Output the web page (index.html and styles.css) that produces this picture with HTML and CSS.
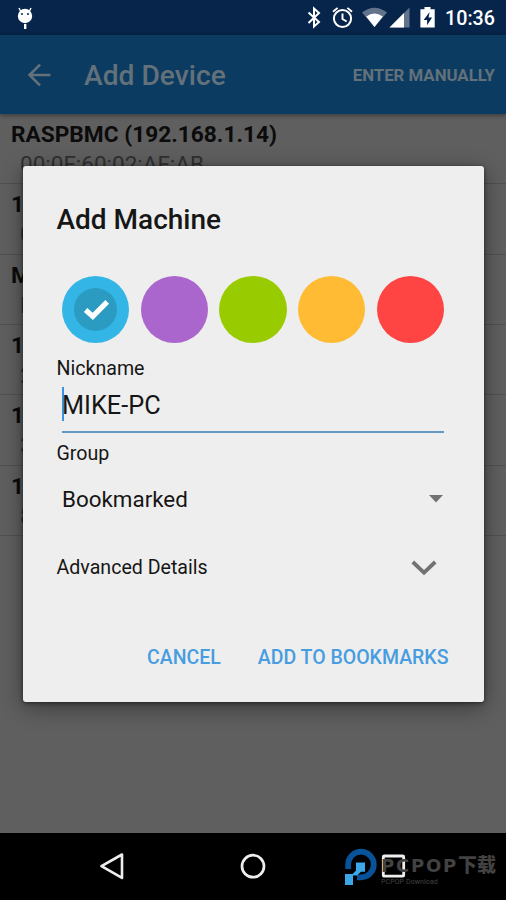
FILE: index.html
```html
<!DOCTYPE html>
<html lang="en">
<head>
<meta charset="utf-8">
<title>Add Device</title>
<link rel="stylesheet" href="styles.css">
</head>
<body>
<div class="screen">
  <header class="status">
    <svg class="droid" width="18" height="24" viewBox="0 0 18 24"><path d="M4.500 4 3 1M13.500 4 15 1" stroke="#fff" stroke-width="1.4"/><circle cx="9" cy="9" r="7.2" fill="#fff"/><path d="M8 17h2.400v5H8z" fill="#fff"/><circle cx="6" cy="7" r="1" fill="#07254a"/><circle cx="12" cy="7" r="1" fill="#07254a"/></svg>
    <svg class="icons" width="132" height="24" viewBox="0 0 132 24" fill="none" stroke="#fff">
      <path d="M2.500 6.500l10.500 9.500-5 4.500V2.500L13 7 2.500 17" stroke-width="2"/>
      <circle cx="36.500" cy="12.500" r="8.600" stroke-width="2"/><path d="M36.500 7.500v5.500l4.200 2.500M27 5.800l4.600-3.900M46 5.800l-4.600-3.900" stroke-width="1.9"/>
      <path d="M56 6.500Q68.500-3 81 6.500L68.500 21z" fill="#62738c" stroke="none"/><path d="M60.200 10.500Q68.500 4.500 76.800 10.500L68.500 21z" fill="#fff" stroke="none"/>
      <path d="M103.500 1.500v20h-20z" fill="#62738c" stroke="none"/><path d="M98 7v14.500H83.500z" fill="#fff" stroke="none"/>
      <path d="M118.500 1h6v2.200h4.200v18.300h-14.300V3.200h4.100z" fill="#fff" stroke="none"/><path d="M123.600 6l-6 8h3.500v5.300l5-7.800h-3.500z" fill="#07254a" stroke="none"/>
    </svg>
    <span class="clock">10:36</span>
  </header>
  <div class="appbar">
    <svg width="24" height="24" viewBox="0 0 24 24" fill="none" stroke="#63717b" stroke-width="2.600"><path d="M23.500 12H3M13 1.600 2.500 12l10.500 10.400"/></svg>
    <h1>Add Device</h1>
    <span class="manual">ENTER MANUALLY</span>
  </div>
  <main class="list">
    <div class="row"><b>RASPBMC (192.168.1.14)</b><span>00:0F:60:02:AF:AB</span></div>
    <div class="row"><b>1</b><span>0</span></div>
    <div class="row"><b>M</b><span>B</span></div>
    <div class="row"><b>1</b><span>2</span></div>
    <div class="row"><b>1</b><span>3</span></div>
    <div class="row"><b>1</b><span>8</span></div>
  </main>
  <nav class="navbar">
    <svg width="26" height="30" viewBox="0 0 26 30"><path d="M22 3.500v23.400L1.500 15.200z" fill="none" stroke="#eee" stroke-width="2.600" stroke-linejoin="round"/></svg>
    <svg width="26" height="30" viewBox="0 0 26 30"><circle cx="13" cy="15.200" r="11" fill="none" stroke="#eee" stroke-width="2.700"/></svg>
    <svg width="26" height="30" viewBox="0 0 26 30"><rect x="2.300" y="5" width="20.400" height="20.200" rx="1" fill="none" stroke="#eee" stroke-width="2.800"/></svg>
  </nav>

  <section class="dialog">
    <h2>Add Machine</h2>
    <div class="swatches">
      <i class="dot blue"><svg width="43" height="43" viewBox="0 0 43 43"><circle cx="21.500" cy="21.500" r="21.500" fill="#2b9bc2"/><path d="M11.600 22 18.800 28.400 33.200 13.900" fill="none" stroke="#fff" stroke-width="5.200"/></svg></i>
      <i class="dot purple"></i><i class="dot green"></i><i class="dot orange"></i><i class="dot red"></i>
    </div>
    <label class="label nick">Nickname</label>
    <div class="field"><i class="caret"></i><span>MIKE-PC</span></div>
    <label class="label group">Group</label>
    <div class="select"><span>Bookmarked</span><svg width="14" height="8" viewBox="0 0 14 8"><path d="M0 0h14L7 7.500z" fill="#727272"/></svg></div>
    <div class="advanced"><span>Advanced Details</span><svg width="26" height="16" viewBox="0 0 26 16"><path d="M1.800 2 13 12.600 24.200 2" fill="none" stroke="#727272" stroke-width="3.800"/></svg></div>
    <div class="actions"><span>CANCEL</span><span>ADD TO BOOKMARKS</span></div>
  </section>

  <div class="watermark">
    <svg width="34" height="38" viewBox="0 0 34 38"><path d="M3.200 21V16.500A12.800 12.800 0 1 1 16 29.300H12" fill="none" stroke="#075298" stroke-width="5.800"/><path d="M11 14.500h9v9.300h-4l-4 3.700H8v9.500H0V26h7.500l3.500-3.500z" fill="#3ba7e8"/></svg>
    <div class="brand"><strong><span class="latin">PCPOP</span>下载</strong><small>PCPOP Download</small></div>
  </div>
</div>
</body>
</html>
```
FILE: styles.css
```css
* { box-sizing: border-box; }
body { margin: 0; font-family: Roboto, "Noto Sans CJK SC", sans-serif; }
h1, h2 { margin: 0; font-weight: 500; }
svg { display: block; flex: none; }
.screen { position: relative; width: 506px; height: 900px; overflow: hidden; display: flex; flex-direction: column; background: #5f5f5f; }
.status { height: 35px; flex: none; display: flex; align-items: flex-start; background: #07254a; color: #fff; padding: 6px 11px 0 16px; }
.status .icons { margin-left: auto; }
.droid { margin-top: 1px; }
.clock { width: 50px; margin-left: 7px; font-size: 19.7px; font-weight: 500; line-height: 26px; white-space: nowrap; }
.appbar { height: 79px; flex: none; display: flex; align-items: center; padding: 0 11px 0 27px; background: #0c3b61; color: #63717b; box-shadow: 0 1px 5px rgba(0,0,0,.45); z-index: 1; }
.appbar h1 { margin-left: 33px; font-size: 28.2px; line-height: 34px; padding-top: 3px; }
.manual { margin-left: auto; font-size: 16.8px; font-weight: 700; }
.list { flex: 1; }
.row { height: 70.35px; border-bottom: 1px solid #515151; padding: 7px 11px 0; display: flex; flex-direction: column; white-space: nowrap; color: #0b0b0b; }
.row b { font-size: 22.7px; line-height: 28px; }
.row span { font-size: 22.5px; line-height: 28px; padding: 1px 0 0 9px; color: #303030; }
.navbar { height: 67.4px; flex: none; background: #000; display: flex; justify-content: center; align-items: center; gap: 114.5px; }
.dialog { position: absolute; left: 22.5px; top: 165.5px; width: 461px; height: 536px; padding: 36px 34px 0; background: #eee; border-radius: 3px; box-shadow: 0 5px 22px rgba(0,0,0,.42), 0 1px 4px rgba(0,0,0,.5); color: #161616; }
.dialog h2 { font-size: 28px; line-height: 36px; }
.swatches { display: flex; justify-content: space-between; margin: 38.6px 5.500px 0; }
.dot { width: 67.4px; height: 67.4px; border-radius: 50%; display: flex; align-items: center; justify-content: center; }
.blue { background: #33b5e5; }
.purple { background: #a6c; }
.green { background: #9c0; }
.orange { background: #fb3; }
.red { background: #f44; }
.label { display: block; font-size: 19.6px; line-height: 24px; }
.nick { margin-top: 13.5px; }
.field { display: flex; align-items: center; height: 52px; margin: 0 5.500px; border-bottom: 2px solid #6598c0; font-size: 25.3px; }
.caret { width: 2px; height: 34px; margin: 0 -2px 4px 0; background: #3b92e2; }
.field span { line-height: 30px; }
.group { margin-top: 9px; }
.select { display: flex; align-items: center; justify-content: space-between; height: 68px; margin: 0 5.500px; font-size: 22.4px; }
.select svg { margin: -2px 1px 0 0; }
.select span { margin-top: -1px; }
.advanced { display: flex; align-items: center; justify-content: space-between; height: 68px; padding-right: 12.5px; font-size: 19.6px; }
.actions { display: flex; justify-content: flex-end; gap: 37px; margin-top: 44px; padding-right: 1px; font-size: 19.5px; line-height: 24px; font-weight: 500; color: #479de0; }
.watermark { position: absolute; left: 345px; top: 848px; display: flex; color: #424242; }
.brand { display: flex; flex-direction: column; margin: 6px 0 0 2px; white-space: nowrap; }
.brand strong { display: flex; font-size: 19px; line-height: 24px; font-weight: 900; }
.latin { width: 77px; font-family: "DejaVu Sans", sans-serif; font-size: 18px; font-weight: 700; letter-spacing: 1.8px; }
.brand small { font-size: 7px; line-height: 8px; letter-spacing: .1px; }
```
